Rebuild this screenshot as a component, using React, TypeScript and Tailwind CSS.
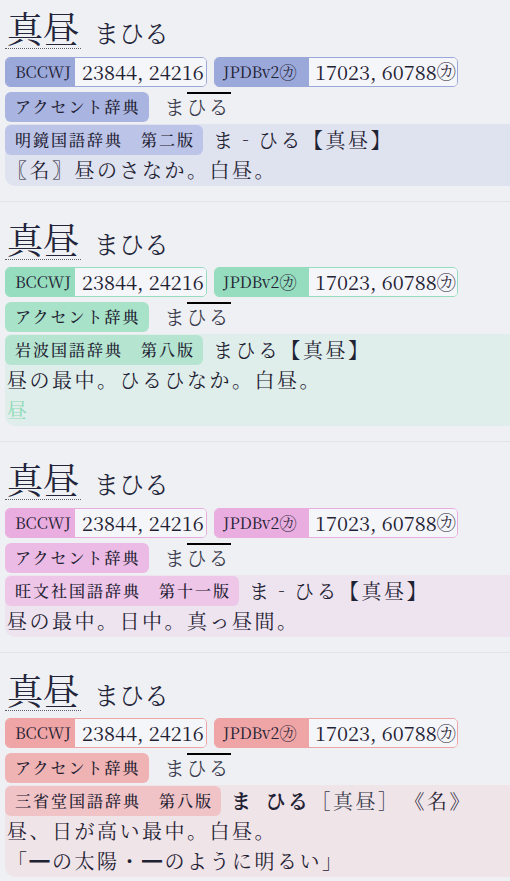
import React from "react";

type Theme = {
  label: string;
  border: string;
  accent: string;
  dict: string;
  block: string;
};

const themes: Theme[] = [
  {
    label: "bg-[#9ba8da]",
    border: "border-[#9ba8da]",
    accent: "bg-[#aab4e0]",
    dict: "bg-[#bcc4e7]",
    block: "bg-[#dfe3ef]",
  },
  {
    label: "bg-[#96dcbe]",
    border: "border-[#96dcbe]",
    accent: "bg-[#a8e2c9]",
    dict: "bg-[#b5e5d0]",
    block: "bg-[#e0eeeb]",
  },
  {
    label: "bg-[#e9addf]",
    border: "border-[#e9addf]",
    accent: "bg-[#ebbbe5]",
    dict: "bg-[#edc6e8]",
    block: "bg-[#ede4f0]",
  },
  {
    label: "bg-[#efa5a6]",
    border: "border-[#efa5a6]",
    accent: "bg-[#f0b3b4]",
    dict: "bg-[#f0c4c7]",
    block: "bg-[#efe4e8]",
  },
];

const JP = {
  fontFamily:
    '"Noto Serif CJK JP", "Noto Sans CJK JP", "Liberation Serif", serif',
};

function Section({
  theme,
  first,
  dictName,
  children,
}: {
  theme: Theme;
  first?: boolean;
  dictName: string;
  children: React.ReactNode[];
}) {
  return (
    <div
      className={
        first
          ? "pl-[5px] pt-[7px] pb-[15px]"
          : "pl-[5px] pt-[16px] pb-[15px] border-t border-[#e3e4e8]"
      }
      style={JP}
    >
      {/* headword */}
      <div className="flex items-baseline text-[#23253a]">
        <span className="inline-block h-[42px] leading-[42px] px-[2px] text-[36px] border-b border-dotted border-[#5b5d6b]">
          真昼
        </span>
        <span className="ml-[13px] text-[25px]">まひる</span>
      </div>

      {/* frequency badges */}
      <div className="mt-[5px] flex gap-[7px] text-[#1f2233]">
        <div
          className={`flex h-[30px] rounded-[5px] border ${theme.border} overflow-hidden`}
        >
          <div
            className={`w-[69px] ${theme.label} flex items-center pl-[9px] text-[16px]`}
          >
            BCCWJ
          </div>
          <div className="w-[131px] bg-[#f5f6fa] flex items-center pl-[7px] text-[20px]">
            23844, 24216
          </div>
        </div>
        <div
          className={`flex h-[30px] rounded-[5px] border ${theme.border} overflow-hidden`}
        >
          <div
            className={`w-[94px] ${theme.label} flex items-center pl-[8px] text-[16px]`}
          >
            JPDBv2<span className="text-[17px]">㋕</span>
          </div>
          <div className="w-[148px] bg-[#f5f6fa] flex items-center pl-[6px] text-[20px]">
            17023, 60788<span className="text-[19px]">㋕</span>
          </div>
        </div>
      </div>

      {/* pitch accent */}
      <div className="mt-[5px] flex h-[30px] items-stretch text-[#1f2233]">
        <div
          className={`${theme.accent} rounded-[6px] flex items-center pl-[10px] pr-[8px] text-[16px] tracking-[2px] font-medium`}
        >
          アクセント辞典
        </div>
        <div className="ml-[16px] flex text-[20px] tracking-[2px] text-[#3a3c4c]">
          <span className="border-t-2 border-transparent leading-[26px]">ま</span>
          <span className="border-t-2 border-black leading-[26px]">ひる</span>
        </div>
      </div>

      {/* dictionary */}
      <div
        className={`mt-[2px] pt-[1px] pb-[1px] ${theme.block} rounded-bl-[10px] rounded-tl-[6px] text-[#1f2233]`}
      >
        <div className="flex h-[30px] items-stretch">
          <div
            className={`${theme.dict} rounded-[6px] flex items-center pl-[10px] pr-[8px] text-[16px] tracking-[2px] font-medium`}
          >
            {dictName}
          </div>
          <div className="ml-[10px] flex items-center text-[20px] tracking-[2.5px]">
            {children[0]}
          </div>
        </div>
        {children.slice(1).map((c, i) => (
          <div
            key={i}
            className="h-[30px] pl-[2px] flex items-center text-[20px] tracking-[2.5px]"
          >
            {c}
          </div>
        ))}
      </div>
    </div>
  );
}

export default function App() {
  return (
    <div className="min-h-[881px] w-[510px] bg-[#eff0f4] overflow-hidden">
      <Section theme={themes[0]} first dictName="明鏡国語辞典　第二版">
        {[
          <span key="a">ま‐ひる【真昼】</span>,
          <span key="b">〖名〗昼のさなか。白昼。</span>,
        ]}
      </Section>
      <Section theme={themes[1]} dictName="岩波国語辞典　第八版">
        {[
          <span key="a">まひる【真昼】</span>,
          <span key="b">昼の最中。ひるひなか。白昼。</span>,
          <span key="c" className="text-[#8edbb8]">
            昼
          </span>,
        ]}
      </Section>
      <Section theme={themes[2]} dictName="旺文社国語辞典　第十一版">
        {[
          <span key="a">ま‐ひる【真昼】</span>,
          <span key="b">昼の最中。日中。真っ昼間。</span>,
        ]}
      </Section>
      <Section theme={themes[3]} dictName="三省堂国語辞典　第八版">
        {[
          <span key="a" className="flex items-center">
            <span className="font-bold">ま</span>
            <span className="font-bold ml-[12px]">ひる</span>
            <span className="text-[#3a3c4c]">［真昼］</span>
            <span className="ml-[4px]">《名》</span>
          </span>,
          <span key="b">昼、日が高い最中。白昼。</span>,
          <span key="c">「━の太陽・━のように明るい」</span>,
        ]}
      </Section>
    </div>
  );
}
